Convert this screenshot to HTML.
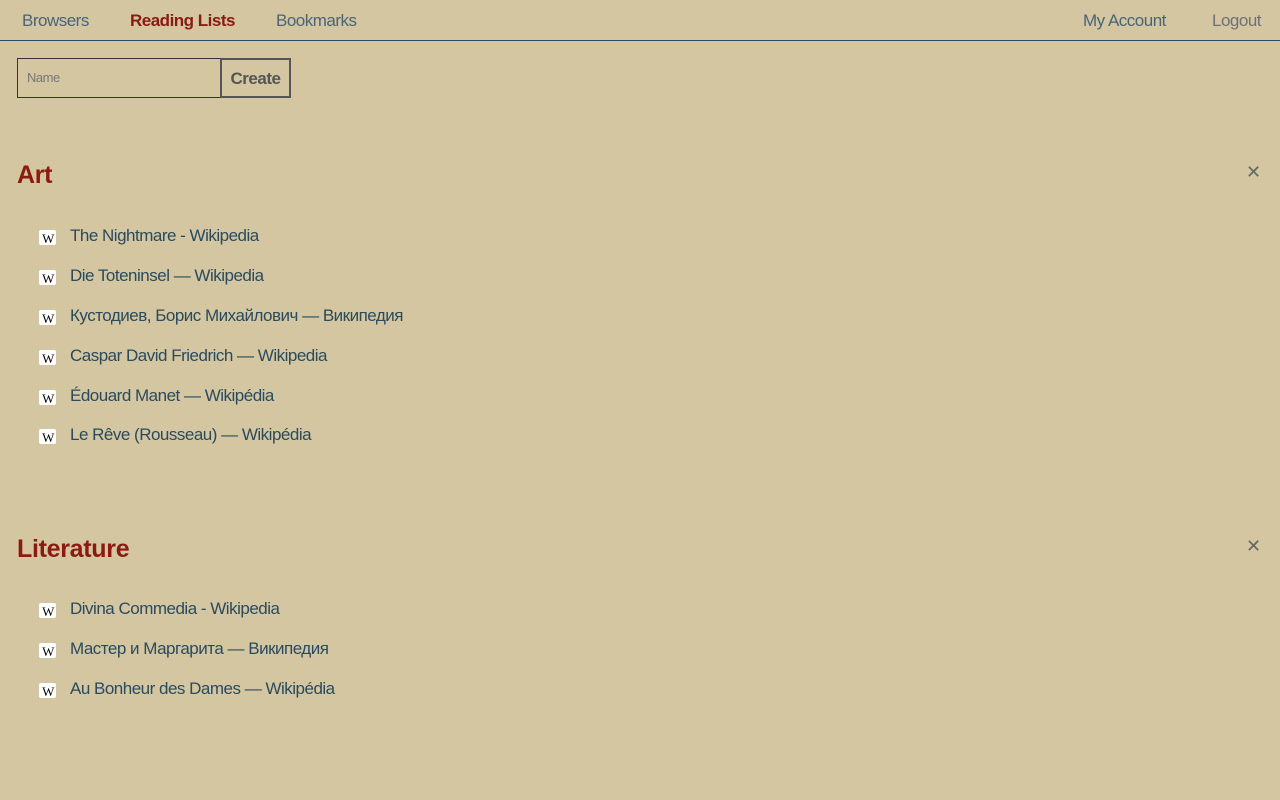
<!DOCTYPE html>
<html><head><meta charset="utf-8"><style>
*{margin:0;padding:0;box-sizing:border-box}
body{width:1280px;height:800px;background:#d3c6a0;font-family:"Liberation Sans",sans-serif;color:#2a4a5e;position:relative;overflow:hidden;letter-spacing:-0.5px}
.nav{position:absolute;left:0;top:0;width:1280px;height:41px;border-bottom:1px solid #2a4a5e}
.nav span{position:absolute;top:11px;font-size:17px;color:#4a6478}
.inp{position:absolute;left:17px;top:58px;width:205px;height:40px;border:1px solid #333;font-size:13px;color:#777;padding:11px 9px}
.btn{position:absolute;left:220px;top:58px;width:71px;height:40px;border:2px solid #555;font-size:17px;font-weight:bold;color:#555;text-align:center;line-height:38px}
h2{position:absolute;left:17px;font-size:25px;color:#8b1a10;font-weight:bold;letter-spacing:-0.3px}
.x{position:absolute;left:1246px;font-size:18px;color:#666}
.it{position:absolute;left:39px;font-size:17px;color:#2a4a5e;white-space:nowrap}
.it i{display:inline-block;width:17px;height:15px;background:#fff;border-radius:2px;font:13px "Liberation Serif",serif;color:#000;text-align:center;line-height:17px;font-style:normal;vertical-align:-2px;margin-right:14px;letter-spacing:-1.5px}
</style></head><body>
<div class="nav">
<span style="left:22px">Browsers</span>
<span style="left:130px;color:#8b1a10;font-weight:bold">Reading Lists</span>
<span style="left:276px">Bookmarks</span>
<span style="left:1083px">My Account</span>
<span style="left:1212px;color:#6e7075">Logout</span>
</div>
<div class="inp">Name</div><div class="btn">Create</div>
<h2 style="top:161px">Art</h2><div class="x" style="top:162px">✕</div>
<div class="it" style="top:226px"><i>W</i>The Nightmare - Wikipedia</div>
<div class="it" style="top:266px"><i>W</i>Die Toteninsel — Wikipedia</div>
<div class="it" style="top:306px"><i>W</i>Кустодиев, Борис Михайлович — Википедия</div>
<div class="it" style="top:346px"><i>W</i>Caspar David Friedrich — Wikipedia</div>
<div class="it" style="top:386px"><i>W</i>Édouard Manet — Wikipédia</div>
<div class="it" style="top:425px"><i>W</i>Le Rêve (Rousseau) — Wikipédia</div>
<h2 style="top:535px">Literature</h2><div class="x" style="top:536px">✕</div>
<div class="it" style="top:599px"><i>W</i>Divina Commedia - Wikipedia</div>
<div class="it" style="top:639px"><i>W</i>Мастер и Маргарита — Википедия</div>
<div class="it" style="top:679px"><i>W</i>Au Bonheur des Dames — Wikipédia</div>
</body></html>
